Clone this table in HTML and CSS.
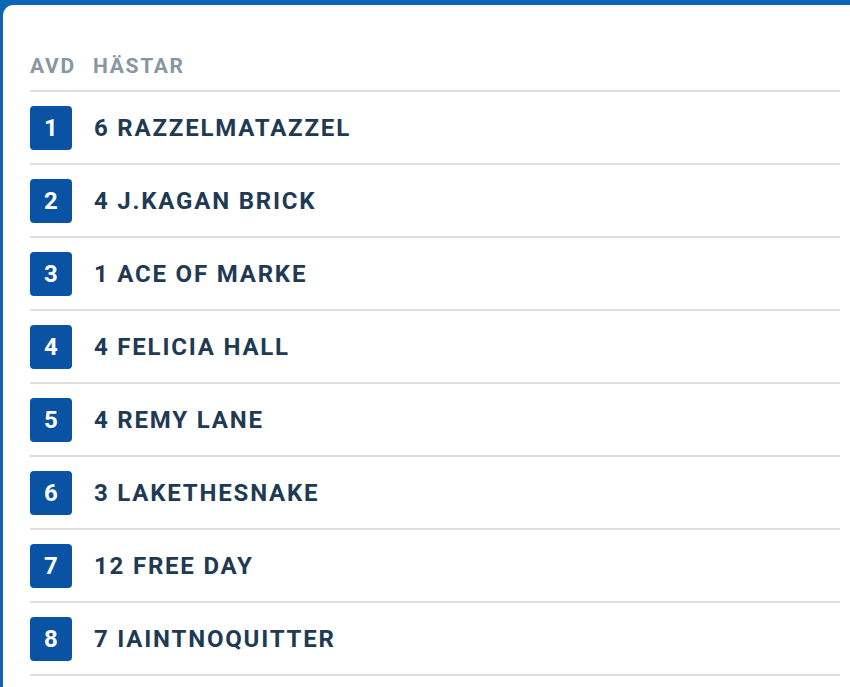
FILE: index.html
```html
<!DOCTYPE html>
<html lang="sv">
<head>
<meta charset="utf-8">
<title>Avdelningar</title>
<link rel="stylesheet" href="styles.css">
</head>
<body>
<div class="card">
  <div class="head">
    <span class="h-avd">AVD</span>
    <span class="h-horse">HÄSTAR</span>
  </div>
  <ul class="rows">
    <li class="row"><span class="badge">1</span><span class="name">6 RAZZELMATAZZEL</span></li>
    <li class="row"><span class="badge">2</span><span class="name">4 J.KAGAN BRICK</span></li>
    <li class="row"><span class="badge">3</span><span class="name">1 ACE OF MARKE</span></li>
    <li class="row"><span class="badge">4</span><span class="name">4 FELICIA HALL</span></li>
    <li class="row"><span class="badge">5</span><span class="name">4 REMY LANE</span></li>
    <li class="row"><span class="badge">6</span><span class="name">3 LAKETHESNAKE</span></li>
    <li class="row"><span class="badge">7</span><span class="name">12&nbsp;FREE DAY</span></li>
    <li class="row"><span class="badge">8</span><span class="name">7 IAINTNOQUITTER</span></li>
  </ul>
</div>
</body>
</html>
```
FILE: styles.css
```css
html, body {
  margin: 0;
  padding: 0;
  background: #0a66b6;
  height: 100%;
  overflow: hidden;
}
body {
  font-family: Roboto, "Liberation Sans", Arial, sans-serif;
}
.card {
  margin: 5px 0 0 3px;
  background: #ffffff;
  border-top-left-radius: 10px;
  padding: 0 10px 0 27px;
  height: 100%;
}
.head {
  display: flex;
  align-items: flex-start;
  height: 87px;
  box-sizing: border-box;
  padding-top: 49px;
  border-bottom: 2px solid #dedfe0;
}
.h-avd, .h-horse {
  font-size: 21px;
  font-weight: 700;
  color: #8895a2;
  letter-spacing: 1.7px;
  line-height: 24px;
}
.h-avd {
  width: 63px;
}
.rows {
  list-style: none;
  margin: 0;
  padding: 0;
}
.row {
  display: flex;
  align-items: center;
  gap: 22px;
  padding: 14px 0 13px;
  border-bottom: 2px solid #dedfe0;
}
.badge {
  width: 42px;
  height: 44px;
  border-radius: 4px;
  background: #0a52a4;
  color: #ffffff;
  font-size: 24px;
  font-weight: 700;
  display: flex;
  align-items: center;
  justify-content: center;
  flex: none;
}
.name {
  font-size: 24px;
  font-weight: 700;
  color: #213a54;
  letter-spacing: 1.8px;
}
```
